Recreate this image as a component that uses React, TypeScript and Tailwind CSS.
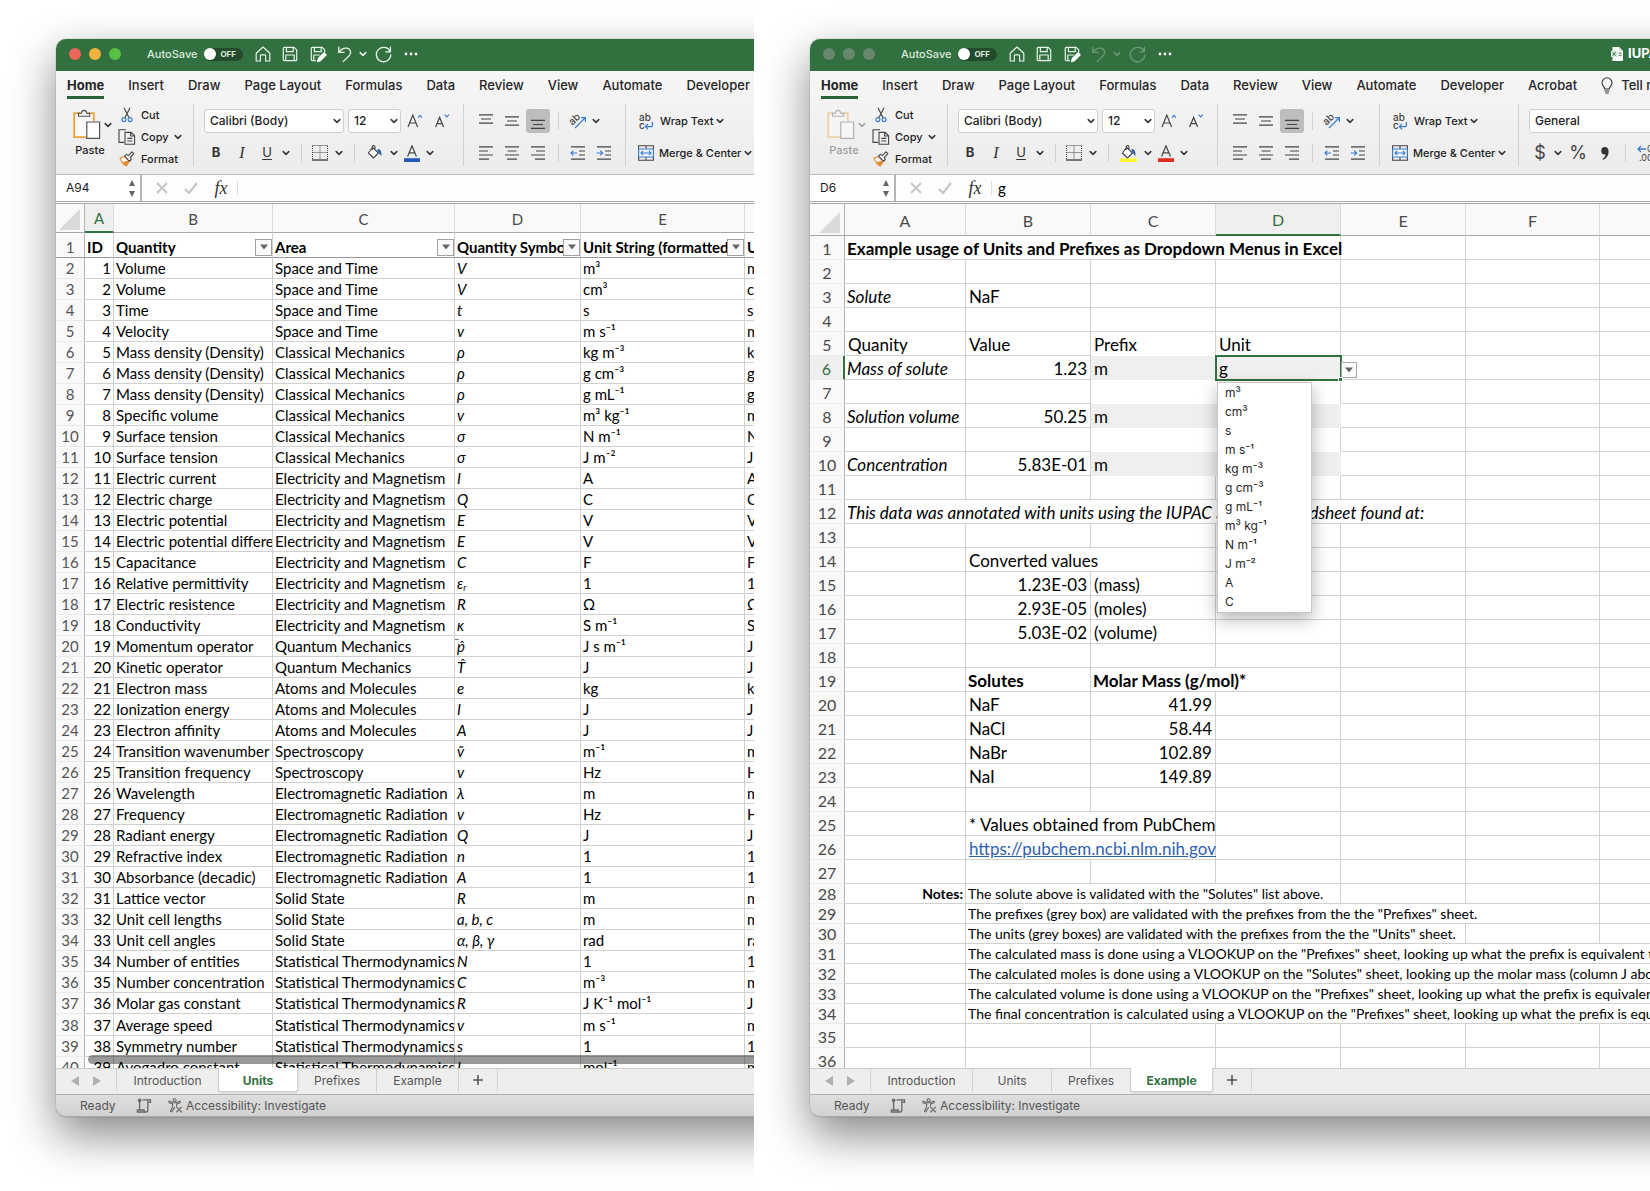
import React, { useState } from "react";
import clsx from "clsx";

type IconProps = { className?: string };

const Chevron = ({ className = "text-[#333]" }: IconProps) => (
  <svg width="8" height="8" viewBox="0 0 8 8" className={className} fill="none" stroke="currentColor" strokeWidth="1.5" strokeLinecap="round" strokeLinejoin="round">
    <path d="M1.2 2.6 4 5.4 6.8 2.6" />
  </svg>
);

const HomeIcon = () => (
  <svg width="16" height="16" viewBox="0 0 16 16" fill="none" stroke="#e9f3ec" strokeWidth="1.2" strokeLinejoin="round">
    <path d="M1.2 7.2 8 1l6.8 6.2V15h-4.2V9.6a.8.8 0 0 0-.8-.8H6.2a.8.8 0 0 0-.8.8V15H1.2z" />
  </svg>
);

const SaveIcon = () => (
  <svg width="16" height="16" viewBox="0 0 16 16" fill="none" stroke="#e9f3ec" strokeWidth="1.2" strokeLinejoin="round">
    <path d="M1.3 2.3a1 1 0 0 1 1-1h9.9l2.5 2.5v9.9a1 1 0 0 1-1 1H2.3a1 1 0 0 1-1-1z" />
    <path d="M4.4 1.3v4.4h6.8V1.3M3.8 14.7V9h8.4v5.7" />
  </svg>
);

const SaveEditIcon = () => (
  <svg width="17" height="17" viewBox="0 0 17 17" fill="none" stroke="#e9f3ec" strokeWidth="1.2" strokeLinejoin="round">
    <path d="M6 14.7H2.3a1 1 0 0 1-1-1V2.3a1 1 0 0 1 1-1h9.9l2.5 2.5V6" />
    <path d="M4.4 1.3v4.4h6.8V1.3M3.8 14.7V9h6" />
    <path d="M7.6 15.6l.8-3.1 5.7-5.8 2.1 2.1-5.7 5.9z" fill="#fff" stroke="#fff" />
  </svg>
);

const UndoIcon = () => (
  <svg width="16" height="17" viewBox="0 0 16 17" fill="none" stroke="currentColor" strokeWidth="1.3" strokeLinecap="round" strokeLinejoin="round">
    <path d="M1.8 1.2v5.2h5.3M2 6.2C4 3.4 7 1.6 10 2.2c3.4.7 4.8 4.4 2.6 7L6.2 15.6" />
  </svg>
);

const RedoIcon = () => (
  <svg width="17" height="17" viewBox="0 0 17 17" fill="none" stroke="currentColor" strokeWidth="1.3" strokeLinecap="round" strokeLinejoin="round">
    <path d="M15.4 1.2v4.6h-4.6M15.2 5.6A7.2 7.2 0 1 0 15.8 9" />
  </svg>
);

const PasteIcon = () => (
  <svg width="30" height="31" viewBox="0 0 30 31" fill="none">
    <path d="M2.2 4.2h19.6v10h-7v14H2.2z" fill="#fafafa" />
    <path d="M8 4.2H2.2v24h12M16.5 4.2h5.3v8" stroke="#eba13c" strokeWidth="1.8" />
    <path d="M6.5 7.3V4.4h2.7c.4-1.8 1.5-3 2.9-3s2.5 1.2 2.9 3h2.7v2.9z" fill="#f7f7f7" stroke="#555" strokeWidth="1.1" />
    <path d="M14.8 13h12.8v16.4H14.8z" fill="#fff" stroke="#555" strokeWidth="1.2" />
  </svg>
);

const CutIcon = () => (
  <svg width="16" height="16" viewBox="0 0 16 16" fill="none" strokeWidth="1.1">
    <path d="M5 .8 10.2 11M11 .8 5.8 11" stroke="#444" />
    <circle cx="4.9" cy="12.6" r="2" stroke="#3b7dcf" />
    <circle cx="11.1" cy="12.6" r="2" stroke="#3b7dcf" />
  </svg>
);

const CopyIcon = () => (
  <svg width="18" height="16" viewBox="0 0 18 16" fill="none" stroke="#444" strokeWidth="1.1">
    <path d="M6 13.4H1V.8h7" />
    <path d="M7 3.4h6l3.6 3.4v8.4H7zM12.6 3.6V7h4M9.3 9.4h5M9.3 12h5" />
  </svg>
);

const BrushIcon = () => (
  <svg width="16" height="16" viewBox="0 0 16 16" fill="none" strokeWidth="1.1" strokeLinejoin="round">
    <path d="M1 7.2 5.2 5.4l5 5L7.4 15C4.6 13.8 2.6 11 1 7.2z" fill="#fff" stroke="#e28a2b" />
    <path d="M3.4 10.6c2 .2 3.6-.3 5-1.2l1 2.4L7.3 14.6C5.6 13.8 4.4 12.4 3.4 10.6z" fill="#e28a2b" />
    <path d="m5.6 5.2 1.8-1.8 1.9 1.2L13 .9l1.9 1.8-3.6 3.8 1 2-1.8 1.8z" fill="#fff" stroke="#444" />
  </svg>
);

const BordersIcon = () => (
  <svg width="16" height="16" viewBox="0 0 16 16" fill="none" stroke="#444">
    <path d="M.5 1v13M15.5 1v13M.5.5h15M.5 7.5h15M8 .5v14" strokeDasharray="1 1" />
    <path d="M0 15h16" strokeWidth="1.4" />
  </svg>
);

const BucketIcon = ({ bar }: { bar: string }) => (
  <svg width="17" height="17" viewBox="0 0 17 17" fill="none" strokeWidth="1.1" strokeLinejoin="round">
    <path d="M6.6 2.4 12.4 8l-5 5-5-5z M6.2 5V2a1.4 1.4 0 0 1 2.8 0v3" stroke="#444" fill="#fff" />
    <path d="M12 4.6c2.4.3 3 1.6 3 5.4l-2.2-3z" fill="#2f6fc4" stroke="#2f5fa8" />
    <path d="M0 13.4h17V17H0z" fill={bar} />
  </svg>
);

const FontColorIcon = ({ bar }: { bar: string }) => (
  <svg width="16" height="17" viewBox="0 0 16 17" fill="none">
    <path d="M3.6 11.4 8 .8l4.4 10.6M5.2 7.8h5.6" stroke="#444" strokeWidth="1.2" />
    <path d="M0 13.2h16V17H0z" fill={bar} />
  </svg>
);

const FontSizeIcon = ({ up }: { up?: boolean }) => (
  <svg width="16" height="16" viewBox="0 0 16 16" fill="none">
    {up ? (
      <path d="M1 14 5.8 2l4.8 12M2.7 10h6.2" stroke="#444" strokeWidth="1.2" />
    ) : (
      <path d="M1.6 14 5.6 4.4 9.6 14M3 10.6h5.2" stroke="#444" strokeWidth="1.2" />
    )}
    <path d={up ? "M11 4.6 13 2.4l2 2.2" : "M10.6 1.6l2.2 2.2 2.2-2.2"} stroke="#3b7dcf" strokeWidth="1.2" />
  </svg>
);

const Lines = ({ d }: { d: string }) => (
  <svg width="16" height="16" viewBox="0 0 16 16" fill="none" stroke="#444" strokeWidth="1.2">
    <path d={d} />
  </svg>
);

const AngleIcon = () => (
  <svg width="18" height="16" viewBox="0 0 18 16" fill="none">
    <text x="0" y="10" transform="rotate(-45 5 7)" fontFamily="Inter, sans-serif" fontSize="10" fill="#444">ab</text>
    <path d="M6 15 16 5M12 4.6h4.4V9" stroke="#3b7dcf" strokeWidth="1.2" />
  </svg>
);

const IndentIcon = ({ inward }: { inward?: boolean }) => (
  <svg width="16" height="16" viewBox="0 0 16 16" fill="none" strokeWidth="1.2">
    <path d="M1 1.8h14M9 6h6M9 10h6M1 14.2h14" stroke="#444" />
    <path d={inward ? "M.6 8h6M4.2 5.6 6.6 8 4.2 10.4" : "M7 8H1M3.4 5.6 1 8l2.4 2.4"} stroke="#3b7dcf" />
  </svg>
);

const WrapIcon = () => (
  <svg width="16" height="17" viewBox="0 0 16 17" fill="none">
    <text x="1" y="7.5" fontFamily="Inter, sans-serif" fontSize="10" fill="#444">ab</text>
    <text x="1" y="16" fontFamily="Inter, sans-serif" fontSize="10" fill="#444">c</text>
    <path d="M14.4 9v3.4c0 .8-.4 1.2-1.2 1.2H7.6M10 11l-2.6 2.6L10 16.2" stroke="#3b7dcf" strokeWidth="1.3" />
  </svg>
);

const MergeIcon = () => (
  <svg width="16" height="16" viewBox="0 0 16 16" fill="none">
    <path d="M.6.8h14.8v14.4H.6zM8 .8v3M8 12.2v3" stroke="#444" strokeWidth="1.1" />
    <path d="M.6 4h14.8v8H.6z" fill="#eef5fc" stroke="#3b7dcf" strokeWidth="1.2" />
    <path d="M3 8h10M5 6 3 8l2 2M11 6l2 2-2 2" stroke="#3b7dcf" strokeWidth="1.1" />
  </svg>
);

const BulbIcon = () => (
  <svg width="12" height="17" viewBox="0 0 12 17" fill="none" stroke="#333" strokeWidth="1.1" strokeLinecap="round">
    <path d="M3.8 12c0-2-2.8-3-2.8-6.2a5 5 0 0 1 10 0C11 9 8.2 10 8.2 12zM4 14h4M4.8 16h2.4" />
  </svg>
);

const DecimalIcon = () => (
  <svg width="24" height="18" viewBox="0 0 24 18" fill="none">
    <path d="M10 5H2M5 2 2 5l3 3" stroke="#3b7dcf" strokeWidth="1.3" />
    <text x="11" y="8" fontFamily="Inter, sans-serif" fontSize="9" fill="#444">0</text>
    <text x="3" y="17" fontFamily="Inter, sans-serif" fontSize="9" fill="#444">.00</text>
  </svg>
);

const ScriptIcon = () => (
  <svg width="16" height="16" viewBox="0 0 16 16" fill="none" stroke="#666" strokeWidth="1.3">
    <path d="M3.6 3.5V12M6.5 1.8h8v2.6h-2.7M11.8 1.8V12c0 1.4-.6 2-1.7 2H1.4v-2h6.8v1.4" />
    <circle cx="3.6" cy="2.4" r="1.8" fill="#666" stroke="none" />
  </svg>
);

const AccessIcon = () => (
  <svg width="15" height="15" viewBox="0 0 15 15" fill="none" stroke="#666" strokeWidth="1.1" strokeLinecap="round" strokeLinejoin="round">
    <circle cx="6.6" cy="2.2" r="1.5" />
    <path d="M1 3.4c-.5.8 0 1.2.6 1.5l3 1.2v2.6l-2 4.2c-.2.8.9 1.3 1.4.6L6.6 9.6M12.2 3.4c.5.8 0 1.2-.6 1.5l-3 1.2v1.8M1.6 3.2l3.6 1.5H8l3.6-1.5M8.6 9.2l5 4.8M13.6 9.2l-5 4.8" />
  </svg>
);

const FileIcon = () => (
  <svg width="12" height="14" viewBox="0 0 12 14">
    <path d="M1.5 0H8l4 4v9a1 1 0 0 1-1 1H1.5z" fill="#fff" />
    <path d="M8 0v4h4" fill="#cfe0d4" />
    <path d="M0 3.6h6.4V10H0z" fill="#d8e8dd" />
    <path d="M1.8 5.2 4.6 8.6M4.6 5.2 1.8 8.6M7.6 6h3M7.6 8.2h3" stroke="#33703f" strokeWidth="1" />
  </svg>
);

const SmallTriangle = ({ d, fill = "#666" }: { d: string; fill?: string }) => (
  <svg width="8" height="8" viewBox="0 0 8 8" fill={fill}>
    <path d={d} />
  </svg>
);

const VDivider = ({ className }: IconProps) => <span className={clsx("w-px shrink-0 bg-[#d0d0d0]", className)} />;

function IconButton({ label, className, children }: { label: string; className?: string; children: React.ReactNode }) {
  return (
    <button type="button" aria-label={label} className={clsx("flex h-6 shrink-0 items-center justify-center", className)}>
      {children}
    </button>
  );
}

function SelectBox({ label, value, className }: { label: string; value: string; className: string }) {
  return (
    <div className={clsx("relative shrink-0", className)}>
      <select
        aria-label={label}
        defaultValue={value}
        className="block h-6 w-full appearance-none rounded-[3px] border border-[#cfcfcf] bg-white pl-[5px] pr-4 text-xs text-[#1d1d1d]"
      >
        <option>{value}</option>
      </select>
      <span className="pointer-events-none absolute right-[3px] top-2">
        <Chevron />
      </span>
    </div>
  );
}

const ribbonTabs = ["Home", "Insert", "Draw", "Page Layout", "Formulas", "Data", "Review", "View", "Automate", "Developer", "Acrobat"];

type Look = { dimmed?: boolean; fill: string; font: string };

function TitleBar({ dimmed, title }: { dimmed?: boolean; title: string }) {
  const faded = dimmed ? "text-[#6b9a75]" : "text-[#e9f3ec]";
  return (
    <header className="flex h-8 shrink-0 items-center rounded-tl-[10px] bg-[#33703f] pb-[2px] pl-[13px] text-white">
      <div className="flex gap-2">
        {["Close", "Minimize", "Zoom"].map((name, i) => (
          <button
            key={name}
            type="button"
            aria-label={name}
            className={clsx("size-3 rounded-full", dimmed ? "bg-[#68876d]" : ["bg-[#ec6559]", "bg-[#f0b33c]", "bg-[#57c045]"][i])}
          />
        ))}
      </div>
      <label className="ml-[26px] flex shrink-0 items-center text-[11px] font-medium text-[#dceade]">
        AutoSave
        <input type="checkbox" className="sr-only" />
        <span className="ml-[7px] flex h-[13px] w-[39px] items-center rounded-full bg-[#234a2b] text-[8px] font-bold leading-none text-[#dceade]">
          <span className="mr-1 size-3 rounded-full bg-white" />
          OFF
        </span>
      </label>
      <div className="ml-[7px] flex shrink-0 items-center">
        <IconButton label="Home" className="w-[25px]"><HomeIcon /></IconButton>
        <IconButton label="Save" className="w-[29px]"><SaveIcon /></IconButton>
        <IconButton label="Save as" className="w-7"><SaveEditIcon /></IconButton>
        <IconButton label="Undo" className={clsx("w-[25px]", faded)}><UndoIcon /></IconButton>
        <IconButton label="Undo history" className={clsx("w-3", faded)}><Chevron className={faded} /></IconButton>
        <IconButton label="Redo" className={clsx("w-[29px]", faded)}><RedoIcon /></IconButton>
        <IconButton label="More" className="w-[26px]">
          <svg width="14" height="4" viewBox="0 0 14 4" fill="#fff">
            <circle cx="2" cy="2" r="1.4" /><circle cx="7" cy="2" r="1.4" /><circle cx="12" cy="2" r="1.4" />
          </svg>
        </IconButton>
      </div>
      {title && (
        <div className="ml-auto mr-[79px] flex w-10 shrink-0 items-center gap-[5px] whitespace-nowrap text-[13px] font-bold">
          <span className="shrink-0"><FileIcon /></span>
          {title}
        </div>
      )}
    </header>
  );
}

function Ribbon({ dimmed, fill, font }: Look) {
  return (
    <div className="flex h-26 shrink-0 flex-col border-b border-[#bdbdbd] bg-linear-to-b from-[#f6f6f6] to-[#ececec] text-[11px] font-medium text-[#1d1d1d]">
      <nav className="flex h-7 shrink-0 items-start gap-6 whitespace-nowrap pl-[11px] text-[13px] text-[#262626]">
        {ribbonTabs.map((tab, i) => (
          <button
            key={tab}
            type="button"
            className={clsx("shrink-0 border-b-3 pb-px pt-1 leading-5", i === 0 ? "border-[#2a6337] font-bold" : "border-transparent")}
          >
            {tab}
          </button>
        ))}
        <button type="button" className="flex shrink-0 items-center gap-2 pb-px pt-1 leading-5">
          <BulbIcon /> Tell me
        </button>
      </nav>
      <div className="flex min-h-0 flex-1 items-start pt-[5px]">
        <div className={clsx("ml-4 flex w-[46px] shrink-0 flex-col pt-[5px]", dimmed && "opacity-40")}>
          <button type="button" className="flex w-full flex-col items-start">
            <span className="flex items-center gap-[2px]">
              <PasteIcon />
              <Chevron />
            </span>
            <span className="ml-[2px] w-[32px] text-center leading-5">Paste</span>
          </button>
        </div>
        <div className="flex w-[72px] shrink-0 flex-col">
          <button type="button" className="flex h-[22px] items-center gap-[5px]"><span className="flex w-[18px] justify-center"><CutIcon /></span>Cut</button>
          <button type="button" className="flex h-[22px] items-center gap-[5px]"><CopyIcon />Copy <Chevron /></button>
          <button type="button" className="flex h-[22px] items-center gap-[5px]"><span className="flex w-[18px] justify-center"><BrushIcon /></span>Format</button>
        </div>
        <VDivider className="ml-[3px] h-[62px]" />
        <div className="ml-[10px] flex w-[259px] shrink-0 flex-col gap-2 pt-[5px]">
          <div className="flex items-center">
            <SelectBox label="Font" value="Calibri (Body)" className="w-[140px]" />
            <SelectBox label="Font size" value="12" className="ml-1 w-[53px]" />
            <IconButton label="Increase font size" className="w-[27px]"><FontSizeIcon up /></IconButton>
            <IconButton label="Decrease font size" className="w-[27px]"><FontSizeIcon /></IconButton>
          </div>
          <div className="flex items-center text-[13px] text-[#333]">
            <IconButton label="Bold" className="w-6 font-bold">B</IconButton>
            <IconButton label="Italic" className="w-7 font-['Liberation_Serif'] text-base italic">I</IconButton>
            <IconButton label="Underline" className="w-[22px] font-normal underline underline-offset-2">U</IconButton>
            <IconButton label="Underline options" className="w-4"><Chevron /></IconButton>
            <VDivider className="mx-[7px] h-[18px]" />
            <IconButton label="Borders" className="w-[22px]"><BordersIcon /></IconButton>
            <IconButton label="Border options" className="w-4"><Chevron /></IconButton>
            <VDivider className="mx-[7px] h-[18px]" />
            <IconButton label="Fill colour" className="w-6"><BucketIcon bar={fill} /></IconButton>
            <IconButton label="Fill options" className="w-4"><Chevron /></IconButton>
            <IconButton label="Font colour" className="w-5"><FontColorIcon bar={font} /></IconButton>
            <IconButton label="Font colour options" className="w-4"><Chevron /></IconButton>
          </div>
        </div>
        <VDivider className="h-[62px]" />
        <div className="ml-[10px] flex w-[151px] shrink-0 flex-col gap-2 pt-[5px]">
          <div className="flex items-center gap-[2px]">
            <IconButton label="Top align" className="w-6"><Lines d="M1 1.8h14M3 6h10M1 10.2h14" /></IconButton>
            <IconButton label="Middle align" className="w-6"><Lines d="M1 3.8h14M3 8h10M1 12.2h14" /></IconButton>
            <IconButton label="Bottom align" className="w-6 rounded-[3px] bg-[#bdbdbd]"><Lines d="M1 7.3h14M3 11.5h10M1 15.4h14" /></IconButton>
            <VDivider className="ml-[6px] mr-[5px] h-[18px]" />
            <IconButton label="Orientation" className="w-6"><AngleIcon /></IconButton>
            <Chevron />
          </div>
          <div className="flex items-center gap-[2px]">
            <IconButton label="Align left" className="w-6"><Lines d="M1 1.8h14M1 6h9M1 10h14M1 14.2h10" /></IconButton>
            <IconButton label="Align centre" className="w-6"><Lines d="M1 1.8h14M3.5 6h9M1 10h14M3 14.2h10" /></IconButton>
            <IconButton label="Align right" className="w-6"><Lines d="M1 1.8h14M6 6h9M1 10h14M5 14.2h10" /></IconButton>
            <VDivider className="ml-[6px] mr-[5px] h-[18px]" />
            <IconButton label="Decrease indent" className="w-6"><IndentIcon /></IconButton>
            <IconButton label="Increase indent" className="w-6"><IndentIcon inward /></IconButton>
          </div>
        </div>
        <VDivider className="h-[62px]" />
        <div className="ml-2 flex w-[130px] shrink-0 flex-col gap-2 whitespace-nowrap pt-[5px]">
          <button type="button" className="flex h-6 items-center"><span className="mr-[2px] flex w-6 justify-center"><WrapIcon /></span>Wrap Text<span className="ml-[3px]"><Chevron /></span></button>
          <button type="button" className="flex h-6 items-center"><span className="mr-px flex w-6 justify-center"><MergeIcon /></span>Merge &amp; Center<span className="ml-[3px]"><Chevron /></span></button>
        </div>
        <VDivider className="h-[62px]" />
        <div className="ml-[10px] flex w-[200px] shrink-0 flex-col gap-2 pt-[5px]">
          <SelectBox label="Number format" value="General" className="w-[200px]" />
          <div className="flex items-center text-lg font-normal text-[#444]">
            <IconButton label="Currency" className="w-[22px]">$</IconButton>
            <IconButton label="Currency options" className="w-[14px]"><Chevron /></IconButton>
            <IconButton label="Percent" className="w-[26px]">%</IconButton>
            <IconButton label="Comma style" className="ml-[6px] w-4">
              <svg width="8" height="13" viewBox="0 0 8 13" fill="#333"><path d="M3.8 0C6.2 0 7.6 1.6 7.6 4.4c0 4.2-2.4 7.2-5.6 8.4l-.6-1c2-1.2 3-2.6 3.2-4.4C2 8 .2 6.4.2 4 .2 1.6 1.6 0 3.8 0z" /></svg>
            </IconButton>
            <VDivider className="ml-3 mr-2 h-[18px]" />
            <IconButton label="Increase decimal" className="w-7"><DecimalIcon /></IconButton>
          </div>
        </div>
      </div>
    </div>
  );
}

function FormulaBar({ cell, value }: { cell: string; value: string }) {
  return (
    <div className="flex h-[29px] shrink-0 items-center border-b-3 border-double border-[#a8a8a8] bg-[#fdfdfd]">
      <div className="flex h-full w-[86px] shrink-0 items-center border-r-2 border-[#b5b5b5] bg-white pl-[10px] pr-1">
        <input aria-label="Name box" defaultValue={cell} className="min-w-0 flex-1 bg-transparent text-xs text-[#1d1d1d]" />
        <span className="flex flex-col gap-[3px]">
          <SmallTriangle d="M4 1 7 7H1z" />
          <SmallTriangle d="M1 1h6L4 7z" />
        </span>
      </div>
      <IconButton label="Cancel" className="ml-[12px] w-4">
        <svg width="12" height="12" viewBox="0 0 12 12" stroke="#c6c6c6" strokeWidth="2"><path d="m1 1 10 10M11 1 1 11" /></svg>
      </IconButton>
      <IconButton label="Enter" className="ml-3 w-[18px]">
        <svg width="14" height="12" viewBox="0 0 14 12" fill="none" stroke="#c6c6c6" strokeWidth="2.2"><path d="m1 7 4 4L13 1" /></svg>
      </IconButton>
      <IconButton label="Insert function" className="ml-[9px] w-6 font-['Liberation_Serif'] text-lg italic text-[#333]">fx</IconButton>
      <VDivider className="ml-1 h-[14px] bg-[#dedede]" />
      <input aria-label="Formula bar" defaultValue={value} className="ml-[6px] min-w-0 flex-1 bg-transparent font-[Lato] text-[15px] text-black" />
    </div>
  );
}

function BottomBars({ active }: { active: string }) {
  const tabs: [string, string][] = [
    ["Introduction", "w-[102px]"],
    ["Units", "w-[79px]"],
    ["Prefixes", "w-[79px]"],
    ["Example", "w-[82px]"],
  ];
  return (
    <>
      <div className="flex h-[26px] shrink-0 items-start border-t border-[#cccccc] bg-[#eeeeee] text-xs text-[#555]">
        <IconButton label="Previous sheet" className="ml-2 w-[22px]">
          <svg width="8" height="10" viewBox="0 0 8 10" fill="#b0b0b0"><path d="M8 0v10L0 5z" /></svg>
        </IconButton>
        <IconButton label="Next sheet" className="w-[22px]">
          <svg width="8" height="10" viewBox="0 0 8 10" fill="#b0b0b0"><path d="M0 0v10l8-5z" /></svg>
        </IconButton>
        <span className="ml-2 h-[22px] w-px bg-[#d2d2d2]" />
        {tabs.map(([name, width]) => (
          <button
            key={name}
            type="button"
            className={clsx(
              "shrink-0 border-r border-[#d2d2d2]",
              width,
              name === active ? "-mt-px h-6 rounded-b-[3px] border-b bg-white pt-[2px] font-bold text-[#33703f] shadow-sm" : "h-[23px]",
            )}
          >
            {name}
          </button>
        ))}
        <button type="button" aria-label="Add sheet" className="flex h-[22px] w-[39px] items-center justify-center border-r border-[#d2d2d2]">
          <svg width="10" height="10" viewBox="0 0 10 10" stroke="#555" strokeWidth="1.6"><path d="M5 0v10M0 5h10" /></svg>
        </button>
      </div>
      <footer className="flex h-[23px] shrink-0 items-center rounded-bl-[10px] border-b border-t border-b-[#a8a8a8] border-t-[#b0b0b0] bg-linear-to-b from-[#dedede] to-[#d2d2d2] pl-6 text-xs text-[#555]">
        <span className="w-[56px]">Ready</span>
        <span className="w-8"><ScriptIcon /></span>
        <button type="button" className="flex items-center gap-[3px]"><AccessIcon />Accessibility: Investigate</button>
      </footer>
    </>
  );
}

function AppWindow(props: Look & { title: string; cell: string; value: string; active: string; children: React.ReactNode }) {
  return (
    <section className="h-screen min-h-[600px] overflow-hidden bg-white pb-[74px] pl-14 pt-[39px]">
      <div className="-mr-20 flex h-full flex-col rounded-l-[10px] shadow-[0_18px_46px_rgba(0,0,0,0.48),0_0_1px_rgba(0,0,0,0.6)]">
        <TitleBar dimmed={props.dimmed} title={props.title} />
        <Ribbon dimmed={props.dimmed} fill={props.fill} font={props.font} />
        <FormulaBar cell={props.cell} value={props.value} />
        <div className="relative min-h-0 flex-1 overflow-hidden bg-white font-[Lato] text-black">{props.children}</div>
        <BottomBars active={props.active} />
      </div>
    </section>
  );
}

function HeadCell({ name, selected, tall }: { name: string; selected?: boolean; tall?: boolean }) {
  return (
    <th
      scope="col"
      className={clsx(
        "border-r p-0 pt-[2px] text-center font-normal",
        tall ? "h-8" : "h-[29px]",
        selected
          ? "border-b-2 border-b-[#33703f] border-r-[#dcdcdc] bg-[#efefef] text-[#33703f]"
          : "border-b border-b-[#a8a8a8] border-r-[#dcdcdc] bg-[#f9f9f9] text-[#4a4a4a]",
      )}
    >
      {name}
    </th>
  );
}

const Corner = () => (
  <td className="border-b border-r border-b-[#a8a8a8] border-r-[#b5b5b5] bg-[#f9f9f9] p-0 align-bottom">
    <svg width="24" height="24" viewBox="0 0 24 24" className="ml-auto mr-[2px]">
      <path d="M22 1v21H1z" fill="#d9d9d9" />
    </svg>
  </td>
);

const FilterButton = ({ label }: { label: string }) => (
  <button type="button" aria-label={label} className="flex size-[17px] shrink-0 items-center justify-center border border-[#a0a0a0] bg-[#fbfbfb]">
    <SmallTriangle d="M0 1.5h8L4 6.5z" />
  </button>
);

const EM = "Electricity and Magnetism";
const CM = "Classical Mechanics";
const ER = "Electromagnetic Radiation";
const ST = "Statistical Thermodynamics";

const units: [string, string, React.ReactNode, string][] = [
  ["Volume", "Space and Time", "V", "m³"],
  ["Volume", "Space and Time", "V", "cm³"],
  ["Time", "Space and Time", "t", "s"],
  ["Velocity", "Space and Time", "v", "m s⁻¹"],
  ["Mass density (Density)", CM, "ρ", "kg m⁻³"],
  ["Mass density (Density)", CM, "ρ", "g cm⁻³"],
  ["Mass density (Density)", CM, "ρ", "g mL⁻¹"],
  ["Specific volume", CM, "v", "m³ kg⁻¹"],
  ["Surface tension", CM, "σ", "N m⁻¹"],
  ["Surface tension", CM, "σ", "J m⁻²"],
  ["Electric current", EM, "I", "A"],
  ["Electric charge", EM, "Q", "C"],
  ["Electric potential", EM, "E", "V"],
  ["Electric potential difference", EM, "E", "V"],
  ["Capacitance", EM, "C", "F"],
  ["Relative permittivity", EM, <>ε<sub className="text-[9px]">r</sub></>, "1"],
  ["Electric resistence", EM, "R", "Ω"],
  ["Conductivity", EM, "κ", "S m⁻¹"],
  ["Momentum operator", "Quantum Mechanics", <span className="relative">p̂<span className="absolute -left-[3px] top-0 text-[11px] leading-none">¨</span></span>, "J s m⁻¹"],
  ["Kinetic operator", "Quantum Mechanics", "T̂", "J"],
  ["Electron mass", "Atoms and Molecules", "e", "kg"],
  ["Ionization energy", "Atoms and Molecules", "I", "J"],
  ["Electron affinity", "Atoms and Molecules", "A", "J"],
  ["Transition wavenumber", "Spectroscopy", "ṽ", "m⁻¹"],
  ["Transition frequency", "Spectroscopy", "v", "Hz"],
  ["Wavelength", ER, "λ", "m"],
  ["Frequency", ER, "v", "Hz"],
  ["Radiant energy", ER, "Q", "J"],
  ["Refractive index", ER, "n", "1"],
  ["Absorbance (decadic)", ER, "A", "1"],
  ["Lattice vector", "Solid State", "R", "m"],
  ["Unit cell lengths", "Solid State", "a, b, c", "m"],
  ["Unit cell angles", "Solid State", "α, β, γ", "rad"],
  ["Number of entities", ST, "N", "1"],
  ["Number concentration", ST, "C", "m⁻³"],
  ["Molar gas constant", ST, "R", "J K⁻¹ mol⁻¹"],
  ["Average speed", ST, "v", "m s⁻¹"],
  ["Symmetry number", ST, "s", "1"],
  ["Avogadro constant", ST, "L", "mol⁻¹"],
];

function UnitsSheet() {
  const cell = "overflow-hidden whitespace-nowrap border-b border-r border-[#d0d0d0] p-0 pt-px leading-[19px]";
  const head = "h-[25px] overflow-hidden whitespace-nowrap border-b border-r border-b-[#999] border-r-[#d0d0d0] p-0 pt-1 text-left font-bold leading-5";
  return (
    <>
      <table className="w-full table-fixed border-separate border-spacing-0 text-[15px]">
        <colgroup>
          <col className="w-[29px]" />
          <col className="w-[29px]" />
          <col className="w-[159px]" />
          <col className="w-[182px]" />
          <col className="w-[126px]" />
          <col className="w-[164px]" />
          <col />
        </colgroup>
        <thead>
          <tr>
            <Corner />
            {["A", "B", "C", "D", "E", ""].map((c) => (
              <HeadCell key={c} name={c} selected={c === "A"} />
            ))}
          </tr>
          <tr>
            <th scope="row" className="border-b border-r border-b-[#999] border-r-[#b5b5b5] bg-[#f9f9f9] p-0 pt-1 text-center font-normal leading-5 text-[#555]">1</th>
            <th scope="col" className={clsx(head, "pl-[2px]")}>ID</th>
            {["Quantity", "Area", "Quantity Symbol", "Unit String (formatted)"].map((h) => (
              <th key={h} scope="col" className={head}>
                <div className="flex items-center pl-[2px]">
                  <span className="min-w-0 flex-1 overflow-hidden">{h}</span>
                  <FilterButton label={"Filter " + h} />
                </div>
              </th>
            ))}
            <th scope="col" className={clsx(head, "pl-[2px]")}>Unit String</th>
          </tr>
        </thead>
        <tbody>
          {units.map(([quantity, area, symbol, unit], i) => {
            const height = i === 36 ? "h-[22px]" : "h-[21px]";
            return (
              <tr key={i}>
                <th scope="row" className={clsx("border-b border-r border-b-[#ececec] border-r-[#b5b5b5] bg-[#f9f9f9] p-0 pt-px text-center font-normal leading-[19px] text-[#555]", height)}>{i + 2}</th>
                <td className={clsx(cell, "pr-[2px] text-right")}>{i + 1}</td>
                <td className={clsx(cell, "pl-[2px]")}>{quantity}</td>
                <td className={clsx(cell, "pl-[2px]")}>{area}</td>
                <td className={clsx(cell, "pl-[2px] italic")}>{symbol}</td>
                <td className={clsx(cell, "pl-[2px]")}>{unit}</td>
                <td className={clsx(cell, "pl-[2px]")}>{unit}</td>
              </tr>
            );
          })}
        </tbody>
      </table>
      <div className="absolute bottom-1 left-8 right-0 h-[9px] rounded-full bg-black/40" />
    </>
  );
}

const menuItems = ["m³", "cm³", "s", "m s⁻¹", "kg m⁻³", "g cm⁻³", "g mL⁻¹", "m³ kg⁻¹", "N m⁻¹", "J m⁻²", "A", "C"];

type Cell = { text?: React.ReactNode; span?: number; kind?: string };
const e: Cell = {};
const blank: Cell[] = [e, e, e, e, e, e, e];
const note = (text: string, span: number, first: Cell = e): Cell[] => [first, { text, span, kind: "note" }, ...blank.slice(0, 6 - span)];

function SelectedUnit({ onToggle, open }: { onToggle: () => void; open: boolean }) {
  return (
    <>
      g
      <span className="pointer-events-none absolute -left-px -right-px -top-px bottom-[-2px] z-10 border-2 border-[#33703f]" />
      <span className="absolute -bottom-[3px] -right-[2px] z-20 size-[5px] border border-white bg-[#33703f]" />
      <button
        type="button"
        aria-label="Choose unit"
        onClick={onToggle}
        className="absolute left-full top-[6px] z-10 flex size-4 items-center justify-center border border-[#a8a8a8] bg-[#fbfbfb]"
      >
        <SmallTriangle d="M0 1.5h8L4 6.5z" />
      </button>
      {open && (
        <ul role="listbox" className="absolute left-px top-[26px] z-10 w-[95px] border border-[#c8c8c8] bg-white pb-px font-[Inter] text-xs text-[#262626] shadow-[0_6px_16px_rgba(0,0,0,0.3)]">
          {menuItems.map((item) => (
            <li key={item} role="option" aria-selected={false} className="h-[19px] pl-[7px] leading-[19px]">{item}</li>
          ))}
        </ul>
      )}
    </>
  );
}

function ExampleSheet() {
  const [open, setOpen] = useState(true);
  const value = (t: string): Cell => ({ text: t, kind: "right" });
  const it = (t: string): Cell => ({ text: t, kind: "italic" });
  const rows: Cell[][] = [
    [{ text: "Example usage of Units and Prefixes as Dropdown Menus in Excel", span: 4, kind: "bold" }, e, e, e],
    blank,
    [it("Solute"), { text: "NaF" }, e, e, e, e, e],
    blank,
    [{ text: "Quanity" }, { text: "Value" }, { text: "Prefix", kind: "above" }, { text: "Unit", kind: "above" }, e, e, e],
    [it("Mass of solute"), value("1.23"), { text: "m", kind: "grey" }, { text: <SelectedUnit open={open} onToggle={() => setOpen(!open)} />, kind: "selected" }, e, e, e],
    [e, e, { kind: "plain" }, { kind: "above" }, e, e, e],
    [it("Solution volume"), value("50.25"), { text: "m", kind: "grey" }, { kind: "grey" }, e, e, e],
    [e, e, { kind: "plain" }, { kind: "above" }, e, e, e],
    [it("Concentration"), value("5.83E-01"), { text: "m", kind: "grey" }, { kind: "grey" }, e, e, e],
    blank,
    [{ text: "This data was annotated with units using the IUPAC Symbol spreadsheet found at:", span: 5, kind: "italic" }, e, e],
    blank,
    [e, { text: "Converted values", span: 2 }, e, e, e, e],
    [e, value("1.23E-03"), { text: "(mass)" }, e, e, e, e],
    [e, value("2.93E-05"), { text: "(moles)" }, e, e, e, e],
    [e, value("5.03E-02"), { text: "(volume)" }, e, e, e, e],
    blank,
    [e, { text: "Solutes", kind: "bold" }, { text: "Molar Mass (g/mol)*", span: 2, kind: "bold" }, e, e, e],
    [e, { text: "NaF" }, value("41.99"), e, e, e, e],
    [e, { text: "NaCl" }, value("58.44"), e, e, e, e],
    [e, { text: "NaBr" }, value("102.89"), e, e, e, e],
    [e, { text: "NaI" }, value("149.89"), e, e, e, e],
    blank,
    [e, { text: "* Values obtained from PubChem", span: 2 }, e, e, e, e],
    [e, { text: <a href="https://pubchem.ncbi.nlm.nih.gov" className="text-[#2f5fae] underline">https://pubchem.ncbi.nlm.nih.gov</a>, span: 2 }, e, e, e, e],
    blank,
    note('The solute above is validated with the "Solutes" list above.', 3, { text: "Notes:", kind: "notesLabel" }),
    note('The prefixes (grey box) are validated with the prefixes from the the "Prefixes" sheet.', 5),
    note('The units (grey boxes) are validated with the prefixes from the the "Units" sheet.', 4),
    note('The calculated mass is done using a VLOOKUP on the "Prefixes" sheet, looking up what the prefix is equivalent to (e.g. m = 0.001)', 6),
    note('The calculated moles is done using a VLOOKUP on the "Solutes" sheet, looking up the molar mass (column J above)', 6),
    note('The calculated volume is done using a VLOOKUP on the "Prefixes" sheet, looking up what the prefix is equivalent to', 6),
    note('The final concentration is calculated using a VLOOKUP on the "Prefixes" sheet, looking up what the prefix is equivalent to', 6),
    blank,
    blank,
  ];
  const kinds: Record<string, string> = {
    bold: "border-b border-r pl-[2px] font-bold",
    italic: "border-b border-r pl-[2px] italic",
    right: "border-b border-r pr-[3px] text-right",
    note: "border-b border-r pl-[2px] text-[14px]",
    notesLabel: "border-b border-r pr-[2px] text-right text-[14px] font-bold",
    grey: "border-b border-b-transparent bg-[#efefef] pl-[3px]",
    plain: "border-b border-b-transparent pl-[3px]",
    above: "border-b border-r border-b-transparent pl-[3px]",
    selected: "relative border-b border-b-transparent bg-[#efefef] pl-[3px]",
  };
  return (
    <table className="w-full table-fixed border-separate border-spacing-0 text-[17px]">
      <colgroup>
        <col className="w-[35px]" />
        <col className="w-[121px]" />
        <col className="w-[125px]" />
        <col className="w-[125px]" />
        <col className="w-[125px]" />
        <col className="w-[125px]" />
        <col className="w-[134px]" />
        <col />
      </colgroup>
      <thead className="text-base">
        <tr>
          <Corner />
          {["A", "B", "C", "D", "E", "F", ""].map((c) => (
            <HeadCell key={c} name={c} selected={c === "D"} tall />
          ))}
        </tr>
      </thead>
      <tbody>
        {rows.map((row, r) => {
          const small = r >= 27 && r <= 33;
          const height = small ? "h-5 leading-[19px]" : "h-6 pt-[2px] leading-[21px]";
          return (
            <tr key={r}>
              <th
                scope="row"
                className={clsx(
                  "border-b border-b-[#ececec] p-0 text-center text-base font-normal",
                  height,
                  r === 5 ? "border-r-2 border-r-[#33703f] bg-[#efefef] text-[#33703f]" : "border-r border-r-[#b5b5b5] bg-[#f9f9f9] text-[#4a4a4a]",
                )}
              >
                <span className={small ? "block leading-[19px]" : "block leading-[21px]"}>{r + 1}</span>
              </th>
              {row.map((c, i) => (
                <td
                  key={i}
                  colSpan={c.span}
                  className={clsx("whitespace-nowrap border-[#d0d0d0] p-0", height, c.kind ? kinds[c.kind] : "border-b border-r pl-[3px]")}
                >
                  {c.text}
                </td>
              ))}
            </tr>
          );
        })}
      </tbody>
    </table>
  );
}

export default function App() {
  return (
    <main className="grid grid-cols-[754fr_896fr] bg-white font-[Inter]">
      <AppWindow title="" cell="A94" value="" active="Units" fill="transparent" font="#2558b8">
        <UnitsSheet />
      </AppWindow>
      <AppWindow title="IUPAC" cell="D6" value="g" active="Example" dimmed fill="#fdf733" font="#e02d20">
        <ExampleSheet />
      </AppWindow>
    </main>
  );
}
